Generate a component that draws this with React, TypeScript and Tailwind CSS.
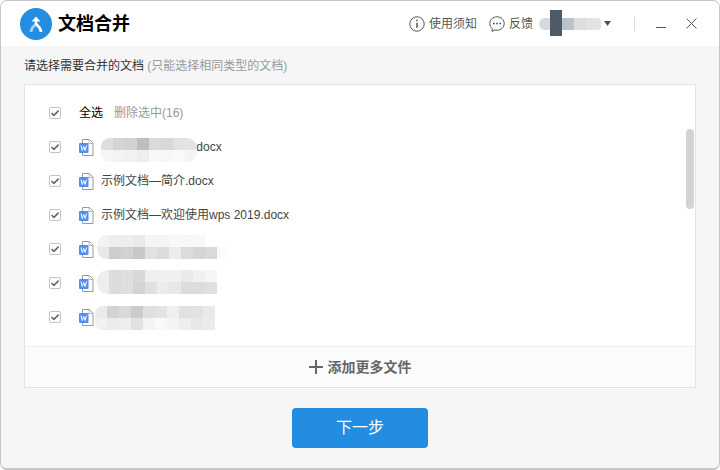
import React from 'react';

const FONT = "font-['Liberation_Sans','Noto_Sans_CJK_SC',sans-serif]";

const Mosaic = ({ rows, className }: { rows: string[][]; className: string }) => (
  <div className={`absolute flex flex-col overflow-hidden ${className}`}>
    {rows.map((cells, i) => (
      <div key={i} className="flex h-[12px]">
        {cells.map((color, j) => (
          <div key={j} className="w-[12px] h-full shrink-0" style={{ backgroundColor: color }} />
        ))}
      </div>
    ))}
  </div>
);

const CheckBox = () => (
  <div className="w-[12px] h-[12px] shrink-0 rounded-[2px] border border-[#c4c4c4] bg-white flex items-center justify-center">
    <svg className="w-[10px] h-[10px]" viewBox="0 0 10 10" fill="none" stroke="#666666" strokeWidth="1.6">
      <path d="M1.5 5l2.4 2.3L8.6 2.6" />
    </svg>
  </div>
);

const FileIcon = () => (
  <svg className="w-[15px] h-[17px] shrink-0" viewBox="0 0 15 17" fill="none">
    <path d="M3.5 .5h7l3.5 3.5v12.5h-10.500z" fill="#ffffff" stroke="#9a9a9a" />
    <path d="M10 .5v4h4" stroke="#b5b5b5" />
    <rect x="0" y="4" width="9.500" height="10" rx="1" fill="#4f8ff2" />
    <path d="M2 6.500l1.300 5 1.450-4 1.450 4 1.300-5" stroke="#ffffff" strokeWidth="1" />
  </svg>
);

const Row = ({ children }: { children?: React.ReactNode }) => (
  <div className="relative h-[34px] flex items-center pl-[24px] shrink-0">
    <CheckBox />
    <div className="ml-[18px]">
      <FileIcon />
    </div>
    <span className="ml-[7px] text-[12px] text-[#444444] whitespace-nowrap">{children}</span>
  </div>
);

export default function App() {
  return (
    <div className={`${FONT} w-[720px] h-[470px] overflow-hidden bg-white`}>
      <div className="w-full h-full flex flex-col overflow-hidden rounded-[7px] border border-[#c6c6c6] border-b-2">
        <header className="h-[45px] shrink-0 bg-white flex items-center pl-[19px]">
          <svg className="w-[32px] h-[32px] shrink-0" viewBox="0 0 32 32" fill="none">
            <circle cx="16" cy="16" r="16" fill="#238de2" />
            <path d="M16 12.500v3" stroke="#ffffff" strokeWidth="2.400" />
            <path d="M11.500 13.500L16 8.500l4.500 5z" fill="#ffffff" />
            <path d="M16 15c0 3-5 3.500-5 9" stroke="#a9d3f5" strokeWidth="2.600" />
            <path d="M16 15c0 3 5 3.500 5 9" stroke="#ffffff" strokeWidth="2.600" />
          </svg>
          <h1 className="ml-[6px] text-[18px] font-bold text-black leading-none">文档合并</h1>
          <div className="ml-auto flex items-center text-[12px] text-[#555555]">
            <svg className="w-[16px] h-[16px]" viewBox="0 0 16 16" fill="none" stroke="#555555">
              <circle cx="8" cy="8" r="7.200" />
              <path d="M8 6.800v5" strokeWidth="1.500" />
              <circle cx="8" cy="4.400" r=".9" fill="#555555" stroke="none" />
            </svg>
            <span className="ml-[4px]">使用须知</span>
            <svg className="ml-[12px] w-[16px] h-[16px]" viewBox="0 0 16 16" fill="none" stroke="#555555">
              <path d="M8 .8c4 0 7.200 2.900 7.200 6.700S12 14.200 8 14.200c-.7 0-1.300-.1-1.900-.2L3 15.300l.3-2.700C1.700 11.300.8 9.500.8 7.500.8 3.700 4 .8 8 .8z" />
              <circle cx="4.800" cy="7.500" r=".9" fill="#555555" stroke="none" />
              <circle cx="8" cy="7.500" r=".9" fill="#555555" stroke="none" />
              <circle cx="11.200" cy="7.500" r=".9" fill="#555555" stroke="none" />
            </svg>
            <span className="ml-[4px]">反馈</span>
            <div className="relative ml-[6px] w-[62px] h-[12px] flex overflow-visible">
              <div className="w-[11px] h-full rounded-l-full bg-[#d6dadd]" />
              <div className="w-[12px] h-[26px] -mt-[8px] bg-[#4d5b69]" />
              <div className="w-[12px] h-full bg-[#bcc3c9]" />
              <div className="w-[12px] h-full bg-[#dcdedf]" />
              <div className="w-[15px] h-full rounded-r-[4px] bg-[#e1e3e5]" />
            </div>
            <svg className="ml-[3px] w-[7px] h-[5px]" viewBox="0 0 7 5" fill="#555555">
              <path d="M0 0h7L3.500 5z" />
            </svg>
            <div className="ml-[23px] w-px h-[14px] bg-[#dddddd]" />
            <svg className="ml-[21px] w-[10px] h-[10px]" viewBox="0 0 10 10" stroke="#555555">
              <path d="M0 8.500h10" />
            </svg>
            <svg className="ml-[20px] mr-[22px] w-[11px] h-[11px]" viewBox="0 0 11 11" fill="none" stroke="#555555">
              <path d="M.5.5l10 10M10.500.5l-10 10" />
            </svg>
          </div>
        </header>

        <main className="flex-1 min-h-0 bg-[#f6f6f6] flex flex-col px-[23px]">
          <p className="mt-[12px] h-[16px] leading-[16px] text-[12px] text-[#333333] whitespace-nowrap">
            请选择需要合并的文档 <span className="text-[#999999]">(只能选择相同类型的文档)</span>
          </p>
          <section className="relative mt-[10px] h-[304px] shrink-0 border border-[#e3e3e3] bg-white flex flex-col">
            <div className="flex-1 min-h-0 overflow-hidden pt-[11px] flex flex-col">
              <div className="h-[34px] shrink-0 flex items-center pl-[24px] text-[12px]">
                <CheckBox />
                <span className="ml-[18px] text-black">全选</span>
                <span className="ml-[11px] text-[#999999]">删除选中(16)</span>
              </div>
              <Row>
                <span className="ml-[92px]">.docx</span>
              </Row>
              <Row>示例文档—简介.docx</Row>
              <Row>示例文档—欢迎使用wps 2019.docx</Row>
              <Row />
              <Row />
              <Row />
            </div>
            <Mosaic
              className="left-[76px] top-[53px] w-[97px] rounded-r-[14px] rounded-l-[10px]"
              rows={[
                ['#dedede', '#d4d4d4', '#d2d2d2', '#bfbebc', '#d8dadc', '#d8d8d6', '#e0e2e6', '#e4e4e4'],
                ['#f6f6f6', '#f3f3f3', '#f1f1f1', '#eeeeee', '#f8f8f8', '#f7f7f7', '#f9f9f9', '#f4f4f4'],
              ]}
            />
            <Mosaic
              className="left-[72px] top-[150px] w-[130px] rounded-l-[10px]"
              rows={[
                ['#f3f3f3', '#eeeeee', '#eeeeee', '#eaeaea', '#f5f5f5', '#f5f5f5', '#f8f8f8', '#f7f7f7', '#f8f8f8', '#ffffff', '#ffffff'],
                ['#e8e8e6', '#cdcdcd', '#d2d2d2', '#c9c8c6', '#e0e1e3', '#dddcda', '#ececec', '#dadbdd', '#d5d5d5', '#d9d9d9', '#fafbfd'],
              ]}
            />
            <Mosaic
              className="left-[72px] top-[185px] w-[120px] rounded-l-[11px]"
              rows={[
                ['#eeeeee', '#dcdcdc', '#dfdfdf', '#d8d8d8', '#eeeff0', '#f0f0f0', '#f1f1f1', '#e9eaea', '#f1f1f1', '#f6f6f6'],
                ['#eeeeee', '#dcdcdc', '#dfdfdf', '#d5d4d1', '#e0e1e3', '#ebecec', '#e8e8e6', '#dcdcdc', '#dbdcdc', '#dfdfdf'],
              ]}
            />
            <Mosaic
              className="left-[70px] top-[221px] w-[122px] rounded-l-[8px]"
              rows={[
                ['#ebebe9', '#d3d3d3', '#dadada', '#cbcbc9', '#dfe0e2', '#e3e3e3', '#f0f0f0', '#e0e1e3', '#e2e2e2', '#e9e9e9'],
                ['#f2f2f2', '#ececec', '#eeeeee', '#e2e2e2', '#f3f4f5', '#f9f9f9', '#f4f4f4', '#eeeeee', '#e7e7e7', '#ebebeb'],
              ]}
            />
            <div className="absolute left-[661px] top-[44px] w-[8px] h-[80px] rounded-full bg-[#d3d3d3]" />
            <footer className="h-[41px] shrink-0 border-t border-[#eeeeee] bg-[#fcfcfc] flex items-center justify-center text-[14px] font-bold text-[#666666]">
              <svg className="w-[14px] h-[14px]" viewBox="0 0 14 14" stroke="#666666" strokeWidth="2">
                <path d="M7 0v14M0 7h14" />
              </svg>
              <span className="ml-[5px]">添加更多文件</span>
            </footer>
          </section>
          <button className="self-center mt-[20px] w-[136px] h-[40px] shrink-0 rounded-[4px] bg-[#238de2] text-white text-[16px]">
            下一步
          </button>
        </main>
      </div>
    </div>
  );
}
